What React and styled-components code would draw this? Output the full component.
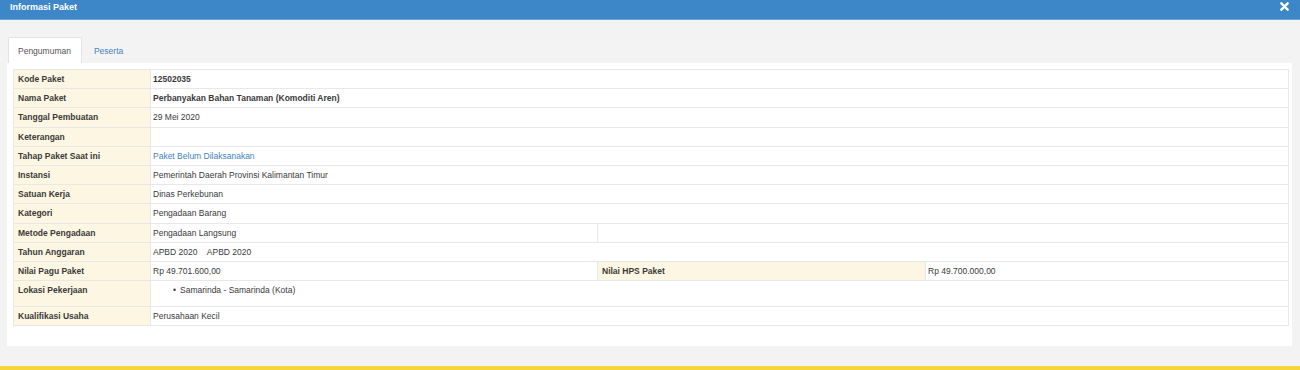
import React from "react";
import styled, { createGlobalStyle } from "styled-components";

const GlobalStyle = createGlobalStyle`
  html, body {
    margin: 0;
    padding: 0;
    background: #f3f3f3;
    font-family: "Liberation Sans", Arial, sans-serif;
  }
`;

const rows = [
  { label: "Kode Paket", value: "12502035", bold: true },
  { label: "Nama Paket", value: "Perbanyakan Bahan Tanaman (Komoditi Aren)", bold: true },
  { label: "Tanggal Pembuatan", value: "29 Mei 2020" },
  { label: "Keterangan", value: "" },
  { label: "Tahap Paket Saat ini", value: "Paket Belum Dilaksanakan", link: true },
  { label: "Instansi", value: "Pemerintah Daerah Provinsi Kalimantan Timur" },
  { label: "Satuan Kerja", value: "Dinas Perkebunan" },
  { label: "Kategori", value: "Pengadaan Barang" },
];

const App = () => {
  return (
    <Page>
      <GlobalStyle />
      <Header>
        <Title>Informasi Paket</Title>
        <Close>
          <svg width="9" height="9" viewBox="0 0 10 10">
            <path d="M1.5 1.5 L8.5 8.5 M8.5 1.5 L1.5 8.5" stroke="#fff" strokeWidth="2.6" strokeLinecap="round" />
          </svg>
        </Close>
      </Header>
      <Body>
        <Tabs>
          <Tab active>Pengumuman</Tab>
          <Tab>Peserta</Tab>
        </Tabs>
        <Panel>
          <Table>
            <colgroup>
              <col style={{ width: 137 }} />
              <col style={{ width: 447 }} />
              <col style={{ width: 328 }} />
              <col />
            </colgroup>
            <tbody>
              {rows.map((r) => (
                <Row key={r.label}>
                  <Label>{r.label}</Label>
                  <Value colSpan={3} bold={r.bold}>
                    {r.link ? <Link>{r.value}</Link> : r.value}
                  </Value>
                </Row>
              ))}
              <Row>
                <Label>Metode Pengadaan</Label>
                <Value>Pengadaan Langsung</Value>
                <Value colSpan={2}></Value>
              </Row>
              <Row>
                <Label>Tahun Anggaran</Label>
                <Value colSpan={3}>APBD 2020&nbsp;&nbsp;&nbsp;&nbsp;APBD 2020</Value>
              </Row>
              <Row>
                <Label>Nilai Pagu Paket</Label>
                <Value>Rp 49.701.600,00</Value>
                <Label>Nilai HPS Paket</Label>
                <Value>Rp 49.700.000,00</Value>
              </Row>
              <Row tall>
                <Label tall>Lokasi Pekerjaan</Label>
                <Value colSpan={3} tall>
                  <List>
                    <Item>Samarinda - Samarinda (Kota)</Item>
                  </List>
                </Value>
              </Row>
              <Row>
                <Label>Kualifikasi Usaha</Label>
                <Value colSpan={3}>Perusahaan Kecil</Value>
              </Row>
            </tbody>
          </Table>
        </Panel>
      </Body>
      <Footer />
    </Page>
  );
};
export default App;

const Page = styled.div`
  width: 1300px;
  height: 370px;
  display: flex;
  flex-direction: column;
  background: #f3f3f3;
  overflow: hidden;
`;

const Header = styled.div`
  height: 19px;
  background: #3d86c8;
  border-bottom: 1px solid #6aa3d6;
  display: flex;
  align-items: center;
  padding: 0 11px 0 10px;
`;

const Title = styled.span`
  color: #fff;
  font-weight: bold;
  font-size: 9px;
  margin-top: -6px;
`;

const Close = styled.span`
  margin-left: auto;
  display: flex;
  margin-top: -6px;
`;

const Body = styled.div`
  flex: 1;
  padding: 17px 8px 0 7px;
`;

const Tabs = styled.div`
  display: flex;
  height: 26px;
  padding-left: 1px;
`;

const Tab = styled.div`
  display: flex;
  align-items: center;
  padding: 0 10px 0 9px;
  font-size: 8.5px;
  color: ${(p) => (p.active ? "#555" : "#3f84bf")};
  background: ${(p) => (p.active ? "#fff" : "transparent")};
  border: 1px solid ${(p) => (p.active ? "#e3e3e3" : "transparent")};
  border-bottom: none;
  border-radius: 2px 2px 0 0;
  margin-right: 2px;
`;

const Panel = styled.div`
  background: #fff;
  height: 283px;
  box-sizing: border-box;
  padding: 6px 3px 0 6px;
`;

const Table = styled.table`
  width: 100%;
  border-collapse: collapse;
  table-layout: fixed;
  border: 1px solid #e4e4e4;
`;

const Row = styled.tr`
  height: ${(p) => (p.tall ? "26px" : "19.2px")};
`;

const cell = `
  border: 1px solid #e8e8e8;
  font-size: 8.5px;
  white-space: nowrap;
  overflow: hidden;
  box-sizing: border-box;
`;

const Label = styled.td`
  ${cell}
  padding: ${(p) => (p.tall ? "4px 4px 0" : "0 4px")};
  background: #fdf6e2;
  color: #3a3a3a;
  font-weight: bold;
  vertical-align: ${(p) => (p.tall ? "top" : "middle")};
`;

const Value = styled.td`
  ${cell}
  padding: ${(p) => (p.tall ? "4px 2px 0" : "0 2px")};
  color: #3a3a3a;
  font-weight: ${(p) => (p.bold ? "bold" : "normal")};
  vertical-align: ${(p) => (p.tall ? "top" : "middle")};
`;

const Link = styled.span`
  color: #3f84bf;
`;

const List = styled.ul`
  margin: 0;
  padding-left: 20px;
  list-style: none;
`;

const Item = styled.li`
  &::before {
    content: "•";
    margin-right: 4px;
  }
`;

const Footer = styled.div`
  height: 4px;
  background: #f5d53a;
  margin-top: auto;
`;
